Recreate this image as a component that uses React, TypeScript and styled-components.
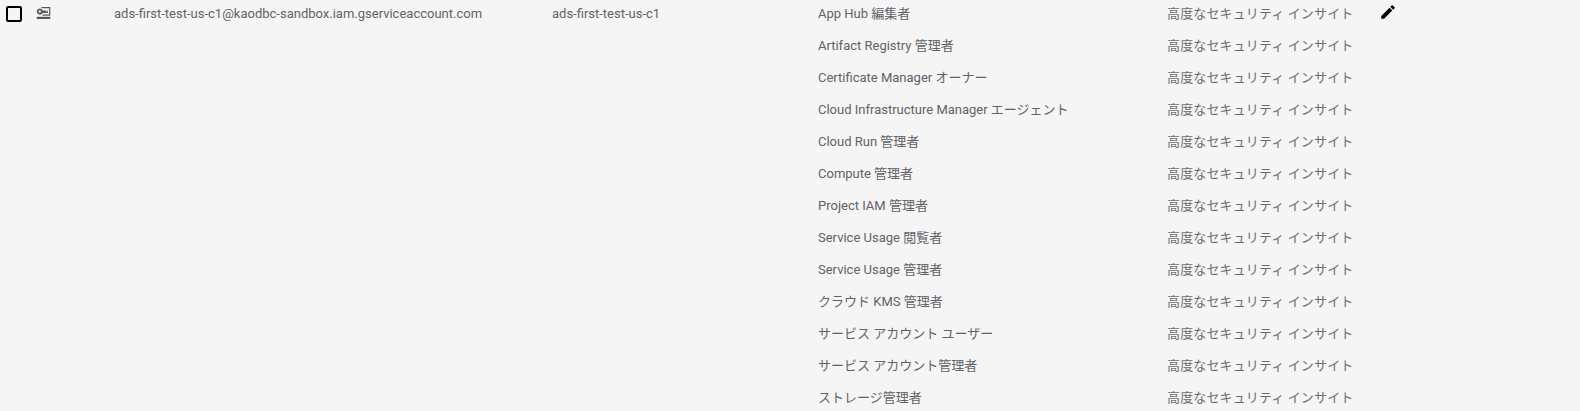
import * as React from "react";
import styled, { createGlobalStyle } from "styled-components";

const GlobalStyle = createGlobalStyle`
    html, body {
        margin: 0;
        padding: 0;
        height: 100%;
        overflow: hidden;
        background: #f5f5f5;
    }
    body {
        font-family: Roboto, "Noto Sans CJK JP", sans-serif;
        font-size: 13px;
        color: #5f6368;
    }
`;

const Row = styled.div`
    display: flex;
    align-items: flex-start;
    height: 411px;
    overflow: hidden;
`;

const CheckCell = styled.div`
    width: 36px;
    padding: 5px 0 0 5px;
    box-sizing: border-box;
    flex: none;
    height: 24px;
    color: #000;
`;

const TypeCell = styled.div`
    width: 78px;
    flex: none;
    padding-top: 5px;
    height: 20px;
    color: #54585d;
`;

const TextCell = styled.div<{ $width: number }>`
    width: ${p => p.$width}px;
    flex: none;
    line-height: 27px;
    height: 27px;
    white-space: nowrap;
`;

const RoleList = styled.div`
    width: 561px;
    flex: none;
    display: flex;
    flex-direction: column;
`;

const RoleRow = styled.div`
    display: grid;
    grid-template-columns: 349px 1fr;
    height: 32px;
    line-height: 27px;
    white-space: nowrap;
`;

const Insight = styled.span`
    color: #6a6e73;
    letter-spacing: 0.13px;
`;

const EditButton = styled.div`
    width: 18px;
    height: 18px;
    padding-top: 3px;
    color: #000;
`;

const roles = [
    "App Hub 編集者",
    "Artifact Registry 管理者",
    "Certificate Manager オーナー",
    "Cloud Infrastructure Manager エージェント",
    "Cloud Run 管理者",
    "Compute 管理者",
    "Project IAM 管理者",
    "Service Usage 閲覧者",
    "Service Usage 管理者",
    "クラウド KMS 管理者",
    "サービス アカウント ユーザー",
    "サービス アカウント管理者",
    "ストレージ管理者",
];

const CheckboxIcon = () => (
    <svg width="18" height="18" viewBox="0 0 18 18" fill="none" style={{ display: "block" }}>
        <rect x="2" y="2" width="14" height="14" rx="1" stroke="currentColor" strokeWidth="2" />
    </svg>
);

const ServiceAccountIcon = () => (
    <svg width="15" height="15" viewBox="0 0 15 15" fill="currentColor" style={{ display: "block" }}>
        <path
            fillRule="evenodd"
            d="M3.7 3.4a3.1 3.1 0 0 1 2.9 2.1h3.2v1h1v-1h1v2.4H6.6A3.1 3.1 0 1 1 3.7 3.4zm0 1.9a1.2 1.2 0 1 0 0 2.4 1.2 1.2 0 0 0 0-2.4z"
        />
        <path d="M5.5 2h8.8v8.8H6.5V9.6h6.6V3.2H5.5z" />
        <rect x="0.8" y="11.8" width="13.5" height="2.2" />
    </svg>
);

const PencilIcon = () => (
    <svg width="18" height="18" viewBox="0 0 24 24" fill="currentColor" style={{ display: "block" }}>
        <path d="M3 17.25V21h3.75L17.81 9.94l-3.75-3.75L3 17.25zM20.71 7.04a1 1 0 0 0 0-1.41l-2.34-2.34a1 1 0 0 0-1.41 0l-1.83 1.83 3.75 3.75 1.83-1.83z" />
    </svg>
);

export default function App() {
    return (
        <>
            <GlobalStyle />
            <Row>
                <CheckCell><CheckboxIcon /></CheckCell>
                <TypeCell><ServiceAccountIcon /></TypeCell>
                <TextCell $width={438}>ads-first-test-us-c1@kaodbc-sandbox.iam.gserviceaccount.com</TextCell>
                <TextCell $width={266}>ads-first-test-us-c1</TextCell>
                <RoleList>
                    {roles.map(role => (
                        <RoleRow key={role}>
                            <span>{role}</span>
                            <Insight>高度なセキュリティ インサイト</Insight>
                        </RoleRow>
                    ))}
                </RoleList>
                <EditButton><PencilIcon /></EditButton>
            </Row>
        </>
    );
}
